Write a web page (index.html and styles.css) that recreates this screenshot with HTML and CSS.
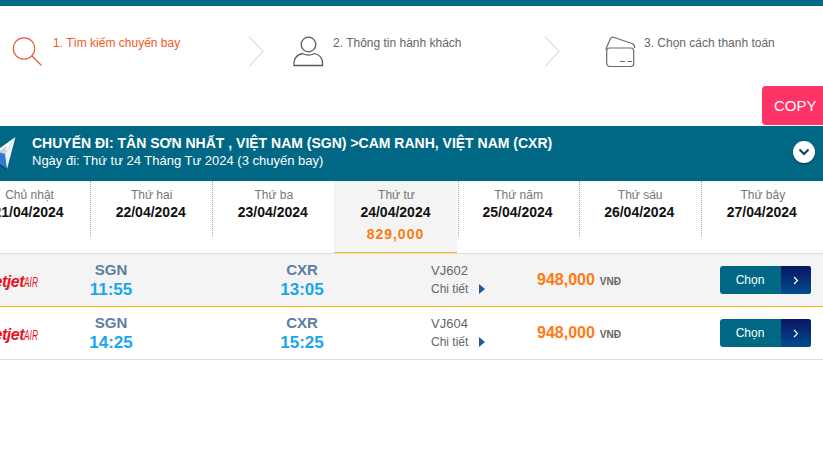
FILE: index.html
```html
<!DOCTYPE html>
<html lang="vi">
<head>
<meta charset="utf-8">
<title>Chọn chuyến bay</title>
<link rel="stylesheet" href="styles.css">
</head>
<body>
<div class="topbar"></div>
<div class="steps">
  <div class="step step-1 active">
    <svg class="step-icon" width="31" height="31" viewBox="0 0 31 31" fill="none" stroke="#ee5a45" stroke-width="1.2"><circle cx="12" cy="12.5" r="10.7"/><path d="M19.8 19.8 L29.5 29.5" stroke-width="1.3"/></svg>
    <span class="step-label">1. Tìm kiếm chuyến bay</span>
  </div>
  <svg class="chev" width="16" height="31" viewBox="0 0 16 31" fill="none" stroke="#c9c9c9" stroke-width="1"><path d="M1 .5 L15 15.5 L1 30.5"/></svg>
  <div class="step step-2">
    <svg class="step-icon" width="31" height="31" viewBox="0 0 31 31" fill="none" stroke="#555b66" stroke-width="1.3"><circle cx="15.5" cy="8.5" r="7.3"/><path d="M1 29.5 H29.5 V27 C29.5 21 25 18.5 21.5 17.5 C18 19.5 13 19.5 9.5 17.5 C5.5 18.5 1 21 1 27 Z"/></svg>
    <span class="step-label">2. Thông tin hành khách</span>
  </div>
  <svg class="chev" width="16" height="31" viewBox="0 0 16 31" fill="none" stroke="#c9c9c9" stroke-width="1"><path d="M1 .5 L15 15.5 L1 30.5"/></svg>
  <div class="step step-3">
    <svg class="step-icon" width="31" height="31" viewBox="0 0 31 31" fill="none" stroke="#666b75" stroke-width="1.2"><rect x="1.7" y="12" width="27" height="18.5" rx="3"/><path d="M.7 13.5 L5.5 2.5 Q6.3 .7 8.5 1.3 L27 7.5 Q29.8 8.6 29.7 12"/><path d="M15 25.5 H20 M22.5 25.5 H27"/></svg>
    <span class="step-label">3. Chọn cách thanh toán</span>
  </div>
</div>
<div class="copy-row"><button class="copy-btn">COPY</button></div>
<div class="flight-head">
  <svg class="plane" width="40" height="36" viewBox="0 0 40 36"><path d="M10 21 L38.5 1 L28 18 Z" fill="#fff"/><path d="M21 16 L30 10 L28 18 Z" fill="#c9d0d6"/><path d="M21 16 L28 18 L30 33 L19 26 Z" fill="#2f7ad0"/><path d="M38.5 1 L28 18 L30 33 Z" fill="#f0f3f5"/><path d="M19 26 L30 33 L30 34 L18 27 Z" fill="#123f6b"/></svg>
  <div class="head-text">
    <div class="head-title">CHUYẾN ĐI: TÂN SƠN NHẤT , VIỆT NAM (SGN) &gt;CAM RANH, VIỆT NAM (CXR)</div>
    <div class="head-sub">Ngày đi: Thứ tư 24 Tháng Tư 2024 (3 chuyến bay)</div>
  </div>
  <span class="toggle"><svg width="12" height="8" viewBox="0 0 12 8" fill="none" stroke="#0b4a60" stroke-width="2.2"><path d="M1.5 1.5 L6 6 L10.5 1.5"/></svg></span>
</div>
<div class="days">
  <div class="day"><div class="day-name">Chủ nhật</div><div class="day-date">21/04/2024</div></div>
  <div class="day"><div class="day-name">Thứ hai</div><div class="day-date">22/04/2024</div></div>
  <div class="day"><div class="day-name">Thứ ba</div><div class="day-date">23/04/2024</div></div>
  <div class="day selected"><div class="day-name">Thứ tư</div><div class="day-date">24/04/2024</div><div class="day-price">829,000</div></div>
  <div class="day"><div class="day-name">Thứ năm</div><div class="day-date">25/04/2024</div></div>
  <div class="day"><div class="day-name">Thứ sáu</div><div class="day-date">26/04/2024</div></div>
  <div class="day last"><div class="day-name">Thứ bảy</div><div class="day-date">27/04/2024</div></div>
</div>
<div class="flight odd">
  <div class="logo"><span class="logo-a">Vietjet</span><span class="logo-b">AIR</span></div>
  <div class="place"><div class="code">SGN</div><div class="time">11:55</div></div>
  <div></div>
  <div class="place"><div class="code">CXR</div><div class="time">13:05</div></div>
  <div></div>
  <div class="info"><div class="num">VJ602</div><div class="detail">Chi tiết<i class="tri"></i></div></div>
  <div class="price">948,000<span class="cur">VNĐ</span></div>
  <button class="pick"><span class="pick-l">Chọn</span><span class="pick-r"><svg width="6" height="9" viewBox="0 0 6 9" fill="none" stroke="#fff" stroke-width="1.2"><path d="M1 1 L4.5 4.5 L1 8"/></svg></span></button>
</div>
<div class="flight even">
  <div class="logo"><span class="logo-a">Vietjet</span><span class="logo-b">AIR</span></div>
  <div class="place"><div class="code">SGN</div><div class="time">14:25</div></div>
  <div></div>
  <div class="place"><div class="code">CXR</div><div class="time">15:25</div></div>
  <div></div>
  <div class="info"><div class="num">VJ604</div><div class="detail">Chi tiết<i class="tri"></i></div></div>
  <div class="price">948,000<span class="cur">VNĐ</span></div>
  <button class="pick"><span class="pick-l">Chọn</span><span class="pick-r"><svg width="6" height="9" viewBox="0 0 6 9" fill="none" stroke="#fff" stroke-width="1.2"><path d="M1 1 L4.5 4.5 L1 8"/></svg></span></button>
</div>
</body>
</html>
```
FILE: styles.css
```css
* { box-sizing: border-box; }
html, body { margin: 0; padding: 0; height: 100%; overflow: hidden; background: #fff; }
body { font-family: "Liberation Sans", Arial, sans-serif; width: 823px; }
.topbar { height: 6px; background: #006885; }
.steps { display: flex; align-items: flex-start; height: 80px; padding: 30px 0 0 12px; }
.step { display: flex; align-items: flex-start; color: #666; font-size: 12px; }
.step.active { color: #f15a24; }
.step-icon { flex: none; margin-right: 10px; }
.step-label { line-height: 14px; }
.step-1 { width: 236px; }
.step-2 { width: 251px; margin-left: 29px; }
.step-2 .step-icon { margin-right: 9px; }
.step-3 { margin-left: 45px; }
.step-3 .step-icon { margin-right: 8px; }
.chev { flex: none; }
.copy-row { display: flex; justify-content: flex-end; height: 40px; }
.copy-btn { width: 61px; height: 39px; padding: 0 0 0 12px; border: 0; border-radius: 4px 0 0 4px; background: #ff3366; color: #fff; font: 15px "Liberation Sans", Arial, sans-serif; text-align: left; }
.flight-head { display: flex; height: 55px; background: #006885; color: #fff; position: relative; }
.plane { flex: none; margin: 10px 0 0 -23px; }
.head-text { margin-left: 15px; padding-top: 8px; }
.head-title { font-size: 14px; font-weight: bold; line-height: 18px; }
.head-sub { font-size: 13px; line-height: 18px; }
.toggle { position: absolute; left: 793px; top: 15px; width: 22px; height: 22px; border-radius: 50%; background: #fff; box-shadow: 0 1px 2px rgba(0,0,0,.4); display: flex; align-items: center; justify-content: center; }
.days { display: grid; grid-template-columns: repeat(7, 122.14px); margin-left: -31px; width: 855px; height: 73px; border-bottom: 1px solid #ddd; }
.day { text-align: center; height: 56px; border-right: 1px dotted #aaa; padding-top: 7px; }
.day.last { border-right: 0; }
.day.selected { height: 72px; margin: 0 1px 0 -1px; padding-left: 2px; background: #f4f4f4; border-right: 0; border-bottom: 1px solid #fcb61a; }
.day.selected + .day { border-left: 1px dotted #aaa; }
.day-name { font-size: 12px; line-height: 14px; color: #777; }
.day-date { font-size: 14px; font-weight: bold; line-height: 18px; margin: 1px 2px 0 0; color: #111; }
.day-price { font-size: 14px; font-weight: bold; line-height: 18px; margin: 4px 2px 0 0; color: #ff7a10; letter-spacing: 1px; }
.flight { display: grid; grid-template-columns: 45px 132px 59px 132px 63px 106px 183px 91px; align-items: center; height: 53px; }
.flight.odd { background: #f4f4f4; border-bottom: 1px solid #fcb61a; }
.flight.even { border-bottom: 1px solid #ddd; }
.logo { display: flex; justify-content: flex-end; align-items: baseline; width: 38px; padding-top: 3px; white-space: nowrap; color: #e8131b; font-style: italic; font-weight: bold; }
.logo-a { font-size: 16px; letter-spacing: -.5px; }
.logo-b { display: inline-block; width: 14px; font-size: 15px; font-weight: normal; transform: scaleX(.56); transform-origin: left; }
.place { text-align: center; padding-top: 2px; }
.code { font-size: 15px; font-weight: bold; line-height: 18px; color: #5b7f9f; }
.time { font-size: 17px; font-weight: bold; line-height: 22px; color: #17a6ef; }
.info { color: #666; font-size: 12px; }
.num { font-size: 13px; line-height: 18px; }
.detail { display: flex; align-items: center; line-height: 18px; }
.tri { width: 0; height: 0; margin-left: 11px; border-left: 6px solid #1f5aa0; border-top: 5px solid transparent; border-bottom: 5px solid transparent; }
.price { font-size: 16px; font-weight: bold; color: #ff7a10; white-space: nowrap; }
.cur { font-size: 10px; color: #666; margin-left: 5px; }
.pick { display: flex; width: 91px; height: 28px; padding: 0; border: 0; border-radius: 3px; overflow: hidden; background: #006885; color: #fff; font: 12px "Liberation Sans", Arial, sans-serif; }
.pick-l { width: 61px; padding-right: 1px; line-height: 28px; text-align: center; }
.pick-r { width: 30px; height: 28px; display: flex; align-items: center; justify-content: center; background: linear-gradient(#0a1560, #004c90); }
```
